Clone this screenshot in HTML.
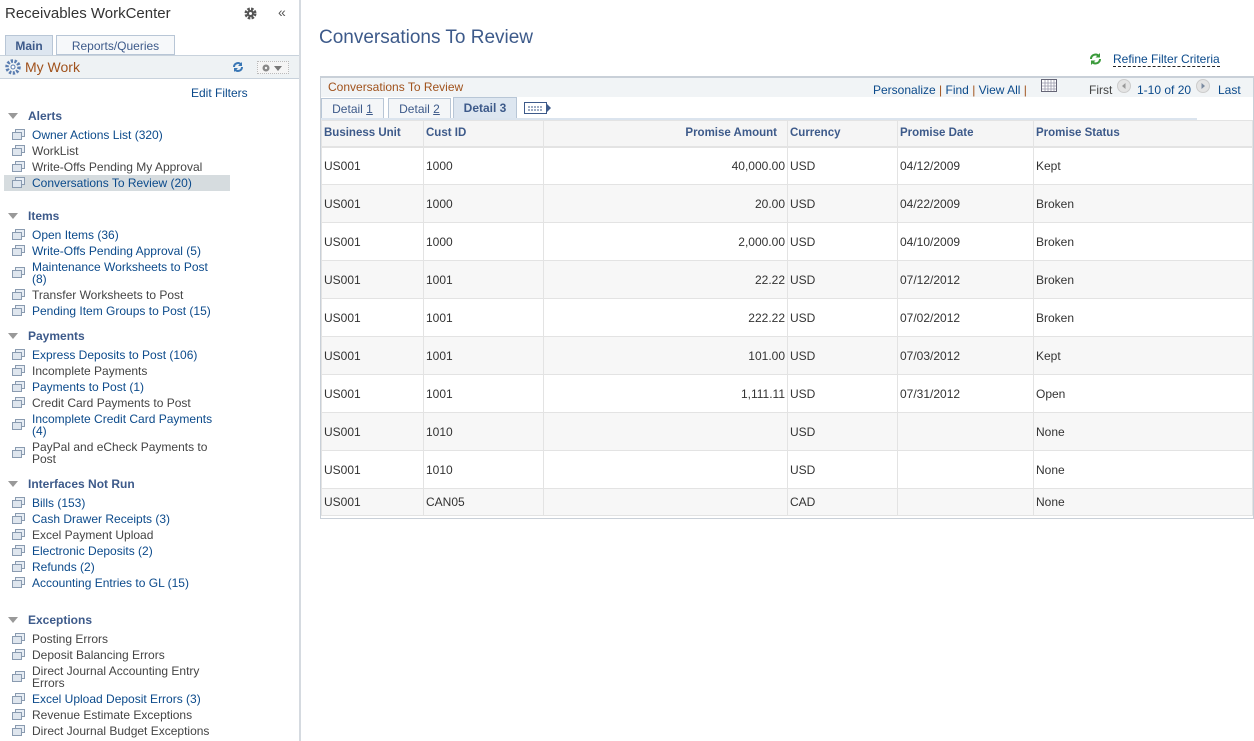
<!DOCTYPE html>
<html><head><meta charset="utf-8"><style>
*{margin:0;padding:0;box-sizing:border-box}
body{width:1254px;height:741px;overflow:hidden;background:#fff;font-family:"Liberation Sans",Arial,sans-serif;font-size:12px;color:#333;position:relative}
.a{position:absolute;white-space:nowrap}
.lk{color:#0b4a8b}
.gr{color:#444}
.h{font-weight:bold;color:#3d5a8a;font-size:12px}
.tri{position:absolute;width:0;height:0;border-left:5px solid transparent;border-right:5px solid transparent;border-top:6px solid #999}
.ic{position:absolute;width:11px;height:9px}
.ic:before{content:"";position:absolute;left:3px;top:0;width:8px;height:6px;border:1px solid #8a9bb0;background:#e8eef5}
.ic:after{content:"";position:absolute;left:0;top:3px;width:8px;height:6px;border:1px solid #8a9bb0;background:#dfe6ee}
.it{position:absolute;left:32px;line-height:12px;margin-top:1px}
table{border-collapse:collapse;position:absolute;left:321px;top:120px;width:932px}
td,th{border:1px solid #e3e3e3;font-size:12px;padding:0 2px;text-align:left;font-weight:normal;color:#333}
th{height:26px;background:#f5f5f5;font-weight:bold;color:#3d5a8a;border-bottom:2px solid #e3e3e3;font-size:11.5px}
td{height:38px}
tr.g td{background:#f7f7f7}
tr.last td{height:27px}
.r{text-align:right}
</style></head><body>
<!-- sidebar -->
<div class="a" style="left:299px;top:0;width:2px;height:741px;background:#d5dae0"></div>
<div class="a" style="left:5px;top:5px;font-size:15px;color:#333">Receivables WorkCenter</div>
<svg class="a" style="left:244px;top:7px" width="13" height="13" viewBox="0 0 13 13"><circle cx="6.5" cy="6.5" r="4.5" fill="none" stroke="#555" stroke-width="3" stroke-dasharray="2.4 1.2"/><circle cx="6.5" cy="6.5" r="3.5" fill="#555"/><circle cx="6.5" cy="6.5" r="1.5" fill="#fff"/></svg>
<div class="a" style="left:278px;top:4px;font-size:14px;color:#555">«</div>
<div class="a" style="left:5px;top:35px;width:48px;height:21px;background:#dde6f0;border:1px solid #b8c6d6;border-bottom:none;font-weight:bold;color:#3d5a8a;text-align:center;line-height:20px">Main</div>
<div class="a" style="left:56px;top:35px;width:119px;height:20px;background:#f6f8fa;border:1px solid #b8c6d6;color:#3d5a8a;text-align:center;line-height:20px">Reports/Queries</div>
<div class="a" style="left:0;top:55px;width:299px;height:24px;background:#eef2f4;border-top:1px solid #c8d2dc;border-bottom:1px solid #c8d2dc"></div>
<svg class="a" style="left:5px;top:59px" width="16" height="16" viewBox="0 0 16 16"><circle cx="8" cy="8" r="6" fill="none" stroke="#5a7db0" stroke-width="3.5" stroke-dasharray="2.2 1.5"/><circle cx="8" cy="8" r="2" fill="#fff" stroke="#5a7db0"/></svg>
<div class="a" style="left:25px;top:59px;font-size:14px;color:#a0521c">My Work</div>
<svg class="a" style="left:232px;top:61px" width="12" height="12" viewBox="0 0 12 12"><path d="M2 6a4 4 0 0 1 7-2.6M10 6a4 4 0 0 1-7 2.6" fill="none" stroke="#3a77b5" stroke-width="2"/><path d="M10 1v4H6z M2 11V7h4z" fill="#3a77b5"/></svg>
<div class="a" style="left:257px;top:61px;width:32px;height:13px;border:1px dotted #bbb;background:#f5f5f5"></div>
<svg class="a" style="left:261px;top:63px" width="26" height="10"><circle cx="5" cy="5" r="3.5" fill="#888"/><circle cx="5" cy="5" r="1.2" fill="#f5f5f5"/><path d="M13 3h8l-4 5z" fill="#777"/></svg>
<div class="a lk" style="left:191px;top:86px">Edit Filters</div>

<div class="tri" style="left:8px;top:113px"></div><div class="a h" style="left:28px;top:109px">Alerts</div>
<div class="a" style="left:4px;top:175px;width:226px;height:16px;background:#d6dcdf"></div>
<div class="ic" style="left:12px;top:129px"></div><div class="it lk" style="top:128px">Owner Actions List (320)</div>
<div class="ic" style="left:12px;top:145px"></div><div class="it gr" style="top:144px">WorkList</div>
<div class="ic" style="left:12px;top:161px"></div><div class="it gr" style="top:160px">Write-Offs Pending My Approval</div>
<div class="ic" style="left:12px;top:177px"></div><div class="it lk" style="top:176px">Conversations To Review (20)</div>

<div class="tri" style="left:8px;top:213px"></div><div class="a h" style="left:28px;top:209px">Items</div>
<div class="ic" style="left:12px;top:229px"></div><div class="it lk" style="top:228px">Open Items (36)</div>
<div class="ic" style="left:12px;top:245px"></div><div class="it lk" style="top:244px">Write-Offs Pending Approval (5)</div>
<div class="ic" style="left:12px;top:267px"></div><div class="it lk" style="top:260px">Maintenance Worksheets to Post<br>(8)</div>
<div class="ic" style="left:12px;top:289px"></div><div class="it gr" style="top:288px">Transfer Worksheets to Post</div>
<div class="ic" style="left:12px;top:305px"></div><div class="it lk" style="top:304px">Pending Item Groups to Post (15)</div>

<div class="tri" style="left:8px;top:333px"></div><div class="a h" style="left:28px;top:329px">Payments</div>
<div class="ic" style="left:12px;top:349px"></div><div class="it lk" style="top:348px">Express Deposits to Post (106)</div>
<div class="ic" style="left:12px;top:365px"></div><div class="it gr" style="top:364px">Incomplete Payments</div>
<div class="ic" style="left:12px;top:381px"></div><div class="it lk" style="top:380px">Payments to Post (1)</div>
<div class="ic" style="left:12px;top:397px"></div><div class="it gr" style="top:396px">Credit Card Payments to Post</div>
<div class="ic" style="left:12px;top:419px"></div><div class="it lk" style="top:412px">Incomplete Credit Card Payments<br>(4)</div>
<div class="ic" style="left:12px;top:447px"></div><div class="it gr" style="top:440px">PayPal and eCheck Payments to<br>Post</div>

<div class="tri" style="left:8px;top:481px"></div><div class="a h" style="left:28px;top:477px">Interfaces Not Run</div>
<div class="ic" style="left:12px;top:497px"></div><div class="it lk" style="top:496px">Bills (153)</div>
<div class="ic" style="left:12px;top:513px"></div><div class="it lk" style="top:512px">Cash Drawer Receipts (3)</div>
<div class="ic" style="left:12px;top:529px"></div><div class="it gr" style="top:528px">Excel Payment Upload</div>
<div class="ic" style="left:12px;top:545px"></div><div class="it lk" style="top:544px">Electronic Deposits (2)</div>
<div class="ic" style="left:12px;top:561px"></div><div class="it lk" style="top:560px">Refunds (2)</div>
<div class="ic" style="left:12px;top:577px"></div><div class="it lk" style="top:576px">Accounting Entries to GL (15)</div>

<div class="tri" style="left:8px;top:617px"></div><div class="a h" style="left:28px;top:613px">Exceptions</div>
<div class="ic" style="left:12px;top:633px"></div><div class="it gr" style="top:632px">Posting Errors</div>
<div class="ic" style="left:12px;top:649px"></div><div class="it gr" style="top:648px">Deposit Balancing Errors</div>
<div class="ic" style="left:12px;top:671px"></div><div class="it gr" style="top:664px">Direct Journal Accounting Entry<br>Errors</div>
<div class="ic" style="left:12px;top:693px"></div><div class="it lk" style="top:692px">Excel Upload Deposit Errors (3)</div>
<div class="ic" style="left:12px;top:709px"></div><div class="it gr" style="top:708px">Revenue Estimate Exceptions</div>
<div class="ic" style="left:12px;top:725px"></div><div class="it gr" style="top:724px">Direct Journal Budget Exceptions</div>

<!-- main -->
<div class="a" style="left:319px;top:27px;font-size:19px;color:#3d5a8a">Conversations To Review</div>
<svg class="a" style="left:1089px;top:52px" width="13" height="14" viewBox="0 0 13 14"><path d="M2 7a4.5 4.5 0 0 1 8-2.8M11 7a4.5 4.5 0 0 1-8 2.8" fill="none" stroke="#3a9a3a" stroke-width="2"/><path d="M11 1v4.5H6.5z M2 13V8.5h4.5z" fill="#3a9a3a"/></svg>
<div class="a lk" style="left:1113px;top:52px;border-bottom:1px dashed #222;line-height:14px">Refine Filter Criteria</div>

<div class="a" style="left:320px;top:76px;width:934px;height:443px;border:1px solid #c9d0d8;border-top:2px solid #c9d0d8"></div>
<div class="a" style="left:321px;top:78px;width:932px;height:19px;background:#f1f4f6"></div>
<div class="a" style="left:328px;top:80px;color:#a0521c">Conversations To Review</div>
<div class="a lk" style="left:873px;top:83px">Personalize <span style="color:#a0521c">|</span> Find <span style="color:#a0521c">|</span> View All <span style="color:#a0521c">|</span></div>
<svg class="a" style="left:1041px;top:79px" width="16" height="13"><rect x="0.5" y="0.5" width="15" height="12" fill="#fff" stroke="#667"/><path d="M1 4h14M1 7h14M1 10h14M4 1v11M7 1v11M10 1v11M13 1v11" stroke="#99a" stroke-width="0.8"/></svg>
<div class="a gr" style="left:1089px;top:83px">First</div>
<svg class="a" style="left:1117px;top:79px" width="14" height="14"><circle cx="7" cy="7" r="6.5" fill="#e4e4e4" stroke="#ccc"/><path d="M8.5 4v6L5 7z" fill="#999"/></svg>
<div class="a lk" style="left:1137px;top:83px">1-10 of 20</div>
<svg class="a" style="left:1196px;top:79px" width="14" height="14"><circle cx="7" cy="7" r="6.5" fill="#e4e4e4" stroke="#ccc"/><path d="M5.5 4v6L9 7z" fill="#7a8aa0"/></svg>
<div class="a lk" style="left:1218px;top:83px">Last</div>

<div class="a" style="left:321px;top:98px;width:63px;height:21px;background:#f4f6f8;border:1px solid #b8c6d6;border-bottom:none;color:#3d5a8a;text-align:center;line-height:20px">Detail <u>1</u></div>
<div class="a" style="left:388px;top:98px;width:63px;height:21px;background:#f4f6f8;border:1px solid #b8c6d6;border-bottom:none;color:#3d5a8a;text-align:center;line-height:20px">Detail <u>2</u></div>
<div class="a" style="left:453px;top:97px;width:64px;height:22px;background:#dde6f0;border:1px solid #b8c6d6;border-bottom:none;color:#3d5a8a;font-weight:bold;text-align:center;line-height:21px">Detail 3</div>
<svg class="a" style="left:524px;top:101px" width="28" height="14"><rect x="0.5" y="1.5" width="22" height="11" fill="#fff" stroke="#3d5a8a"/><path d="M4 6h14M4 9h14" stroke="#3d5a8a" stroke-dasharray="2 1"/><path d="M22 2v10l5-5z" fill="#3d5a8a"/></svg>
<div class="a" style="left:321px;top:118px;width:876px;height:2px;background:#dbe4ee"></div>

<table>
<tr><th style="width:102px">Business Unit</th><th style="width:120px">Cust ID</th><th class="r" style="width:244px;padding-right:10px">Promise Amount</th><th style="width:110px">Currency</th><th style="width:136px">Promise Date</th><th>Promise Status</th></tr>
<tr><td>US001</td><td>1000</td><td class="r">40,000.00</td><td>USD</td><td>04/12/2009</td><td>Kept</td></tr>
<tr class="g"><td>US001</td><td>1000</td><td class="r">20.00</td><td>USD</td><td>04/22/2009</td><td>Broken</td></tr>
<tr><td>US001</td><td>1000</td><td class="r">2,000.00</td><td>USD</td><td>04/10/2009</td><td>Broken</td></tr>
<tr class="g"><td>US001</td><td>1001</td><td class="r">22.22</td><td>USD</td><td>07/12/2012</td><td>Broken</td></tr>
<tr><td>US001</td><td>1001</td><td class="r">222.22</td><td>USD</td><td>07/02/2012</td><td>Broken</td></tr>
<tr class="g"><td>US001</td><td>1001</td><td class="r">101.00</td><td>USD</td><td>07/03/2012</td><td>Kept</td></tr>
<tr><td>US001</td><td>1001</td><td class="r">1,111.11</td><td>USD</td><td>07/31/2012</td><td>Open</td></tr>
<tr class="g"><td>US001</td><td>1010</td><td class="r"></td><td>USD</td><td></td><td>None</td></tr>
<tr><td>US001</td><td>1010</td><td class="r"></td><td>USD</td><td></td><td>None</td></tr>
<tr class="g last"><td>US001</td><td>CAN05</td><td class="r"></td><td>CAD</td><td></td><td>None</td></tr>
</table>
</body></html>
